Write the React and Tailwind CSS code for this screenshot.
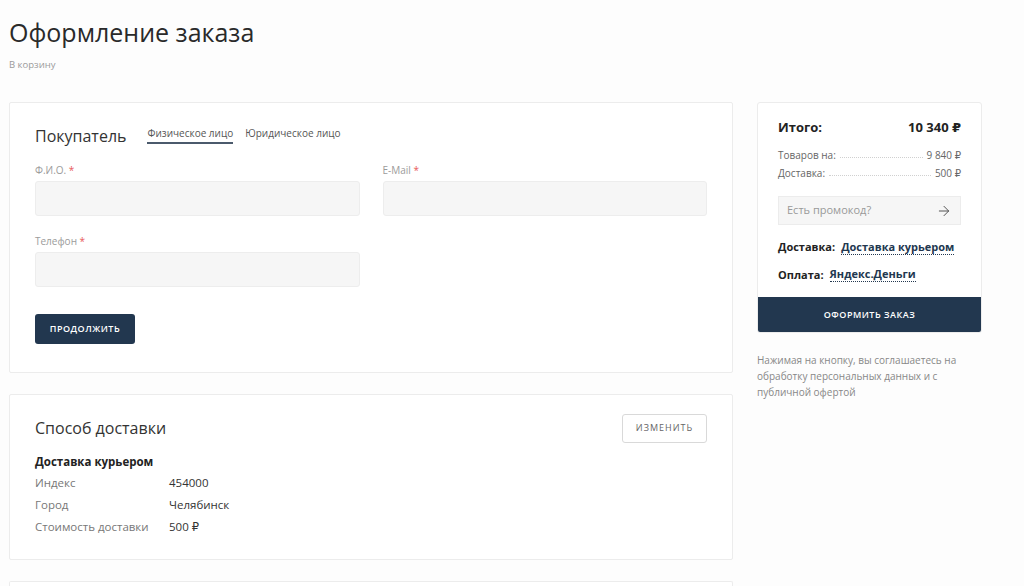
import { ArrowRight } from 'lucide-react';

const font = { fontFamily: '"Open Sans", "DejaVu Sans", sans-serif' };

function Field({ label, className = '' }) {
  return (
    <div className={className}>
      <div className="text-[10px] leading-none text-[#9b9b9b] h-[11px]">
        {label} <span className="text-[#e85a5a]">*</span>
      </div>
      <div className="mt-[5px] h-[35px] rounded-[3px] bg-[#f6f6f6] border border-[#ededed]" />
    </div>
  );
}

function Row({ label, value }) {
  return (
    <div className="flex h-[22px] items-center text-[11.5px]">
      <div className="w-[134px] text-[#777]">{label}</div>
      <div className="text-[#333]">{value}</div>
    </div>
  );
}

export default function App() {
  return (
    <div className="min-h-[586px] bg-[#fdfdfd] text-[#222]" style={font}>
      <div className="pl-[9px] pt-[16px]">
        <h1 className="text-[25px] font-normal leading-[32px] text-[#2a2a2a]">Оформление заказа</h1>
        <div className="mt-[12px] text-[9.5px] text-[#9b9b9b] leading-none">В корзину</div>

        <div className="mt-[32px] flex gap-[24px] items-start">
          <div className="w-[724px] flex flex-col gap-[21px]">
            {/* покупатель */}
            <div className="bg-white border border-[#ececec] rounded-[2px] px-[25px] pt-[25px] pb-[28px]">
              <div className="flex items-end gap-[21px]">
                <div className="text-[16px] leading-none text-[#333]">Покупатель</div>
                <div className="flex gap-[12px] text-[10px] text-[#555]">
                  <div className="border-b-2 border-[#4b5a6c] pb-[4px] leading-none">Физическое лицо</div>
                  <div className="pb-[6px] leading-none">Юридическое лицо</div>
                </div>
              </div>
              <div className="mt-[21px] grid grid-cols-2 gap-x-[23px]">
                <Field label="Ф.И.О." />
                <Field label="E-Mail" />
                <Field label="Телефон" className="mt-[20px]" />
              </div>
              <button className="mt-[27px] h-[30px] w-[100px] rounded-[3px] bg-[#22374f] text-white text-[9px] font-semibold tracking-[0.5px]">
                ПРОДОЛЖИТЬ
              </button>
            </div>

            {/* способ доставки */}
            <div className="bg-white border border-[#ececec] rounded-[2px] px-[25px] pt-[19px] pb-[21px]">
              <div className="flex justify-between items-start">
                <div className="pt-[6px] text-[16px] leading-none text-[#333]">Способ доставки</div>
                <button className="h-[29px] w-[85px] rounded-[3px] border border-[#d9d9d9] text-[9px] text-[#666] tracking-[1px]">
                  ИЗМЕНИТЬ
                </button>
              </div>
              <div className="mt-[10px] text-[11.5px] font-bold text-[#222]">Доставка курьером</div>
              <div className="mt-[2px]">
                <Row label="Индекс" value="454000" />
                <Row label="Город" value="Челябинск" />
                <Row label="Стоимость доставки" value="500 ₽" />
              </div>
            </div>

            <div className="h-[20px] bg-white border border-[#ececec] border-b-0 rounded-t-[2px]" />
          </div>

          {/* итог */}
          <div className="w-[225px]">
            <div className="bg-white border border-[#ececec] rounded-[3px] overflow-hidden">
              <div className="px-[20px] pt-[15px] pb-[14px]">
                <div className="flex justify-between items-center text-[13px] font-bold text-[#222]">
                  <span>Итого:</span>
                  <span>10 340 ₽</span>
                </div>
                <div className="mt-[13px] flex flex-col gap-[8px] text-[10px] text-[#666]">
                  <div className="flex items-center gap-[4px] leading-none">
                    <span>Товаров на:</span>
                    <span className="flex-1 border-b border-dotted border-[#d0d0d0] mt-[4px]" />
                    <span>9 840 ₽</span>
                  </div>
                  <div className="flex items-center gap-[4px] leading-none">
                    <span>Доставка:</span>
                    <span className="flex-1 border-b border-dotted border-[#d0d0d0] mt-[4px]" />
                    <span>500 ₽</span>
                  </div>
                </div>
                <div className="mt-[18px] h-[29px] bg-[#f6f6f6] border border-[#ececec] flex items-center justify-between pl-[8px] pr-[8px]">
                  <span className="text-[11px] text-[#999]">Есть промокод?</span>
                  <ArrowRight size={16} strokeWidth={1.5} className="text-[#555]" />
                </div>
                <div className="mt-[14px] flex items-center gap-[6px] text-[11px] font-bold">
                  <span className="text-[#222]">Доставка:</span>
                  <span className="text-[#22374f] border-b border-dotted border-[#22374f] leading-[14px]">Доставка курьером</span>
                </div>
                <div className="mt-[11px] flex items-center gap-[6px] text-[11px] font-bold">
                  <span className="text-[#222]">Оплата:</span>
                  <span className="text-[#22374f] border-b border-dotted border-[#22374f] leading-[14px]">Яндекс.Деньги</span>
                </div>
              </div>
              <button className="h-[35px] w-full bg-[#22374f] text-white text-[9px] font-semibold tracking-[0.5px]">
                ОФОРМИТЬ ЗАКАЗ
              </button>
            </div>
            <p className="mt-[19px] text-[10px] leading-[16px] text-[#888] pr-[10px]">
              Нажимая на кнопку, вы соглашаетесь на обработку персональных данных и с публичной офертой
            </p>
          </div>
        </div>
      </div>
    </div>
  );
}
